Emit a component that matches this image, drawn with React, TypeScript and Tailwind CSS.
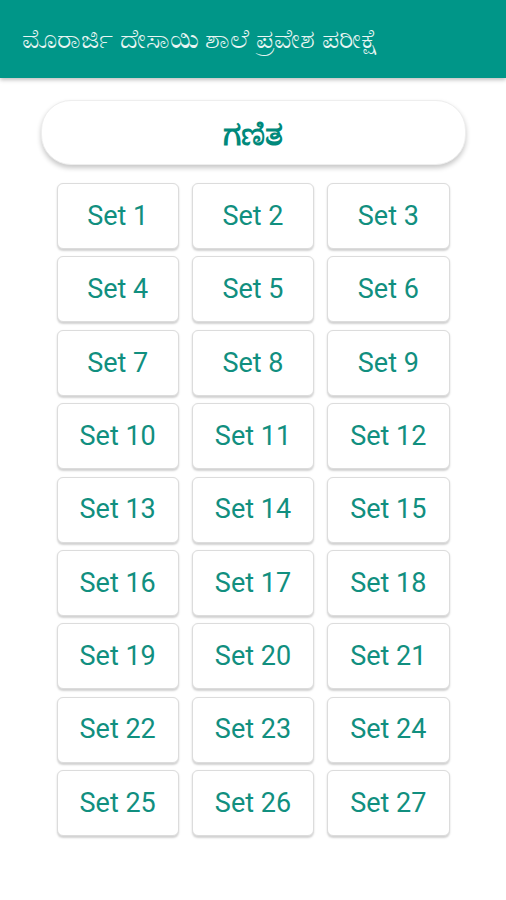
const sets = Array.from({ length: 27 }, (_, i) => i + 1);

export default function App() {
  return (
    <div className="min-h-[900px] bg-white font-['Roboto','Noto_Sans',sans-serif]">
      <header className="flex h-[78px] items-center bg-[#009688] px-[22px] shadow-[0_2px_4px_rgba(0,0,0,0.25)]">
        <h1 className="text-[27px] font-normal leading-none text-[#e8f5f3]">ಮೊರಾರ್ಜಿ ದೇಸಾಯಿ ಶಾಲೆ ಪ್ರವೇಶ ಪರೀಕ್ಷೆ</h1>
      </header>

      <div className="mx-auto mt-[22px] flex h-[65px] w-[425px] items-center justify-center rounded-[30px] border border-[#eeeeee] bg-white shadow-[0_3px_5px_rgba(0,0,0,0.22)]">
        <span className="text-[34px] font-bold leading-none text-[#00897b]">ಗಣಿತ</span>
      </div>

      <div className="mx-auto mt-[18px] grid w-[393px] grid-cols-3 gap-x-[13px] gap-y-[7.4px]">
        {sets.map((n) => (
          <button
            key={n}
            className="flex h-[66px] items-center justify-center rounded-[6px] border border-[#dcdcdc] bg-white text-[27px] text-[#118f7f] shadow-[0_1.5px_2px_rgba(0,0,0,0.18)]"
          >
            Set {n}
          </button>
        ))}
      </div>
    </div>
  );
}
